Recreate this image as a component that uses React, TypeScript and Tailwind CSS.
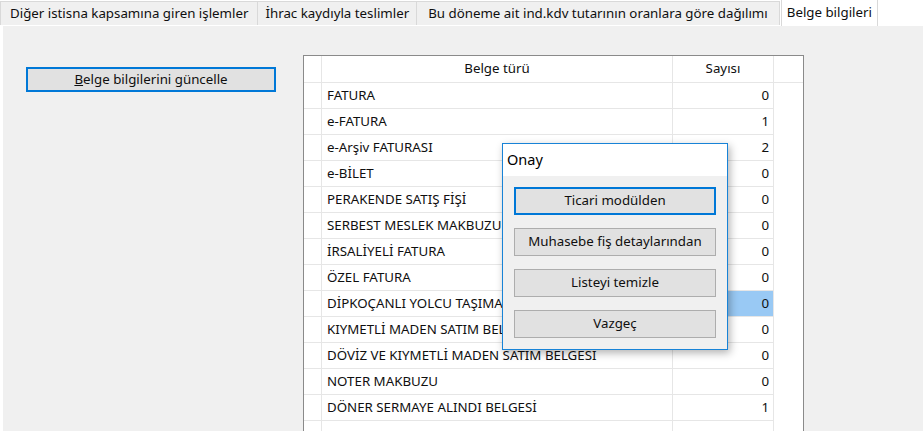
import React from 'react';

const tabs = [
    { label: 'Diğer istisna kapsamına giren işlemler', px: 'px-[9px]' },
    { label: 'İhrac kaydıyla teslimler', px: 'px-[7px]' },
    { label: 'Bu döneme ait ind.kdv tutarının oranlara göre dağılımı', px: 'px-[11px]' },
];

const rows: [string, string][] = [
    ['FATURA', '0'],
    ['e-FATURA', '1'],
    ['e-Arşiv FATURASI', '2'],
    ['e-BİLET', '0'],
    ['PERAKENDE SATIŞ FİŞİ', '0'],
    ['SERBEST MESLEK MAKBUZU', '0'],
    ['İRSALİYELİ FATURA', '0'],
    ['ÖZEL FATURA', '0'],
    ['DİPKOÇANLI YOLCU TAŞIMA BİLETİ', '0'],
    ['KIYMETLİ MADEN SATIM BELGESİ', '0'],
    ['DÖVİZ VE KIYMETLİ MADEN SATIM BELGESİ', '0'],
    ['NOTER MAKBUZU', '0'],
    ['DÖNER SERMAYE ALINDI BELGESİ', '1'],
    ['', ''],
];

const dialogButtons = ['Ticari modülden', 'Muhasebe fiş detaylarından', 'Listeyi temizle', 'Vazgeç'];

const App: React.FC = () => {
    return (
        <div className="relative w-[923px] h-[431px] overflow-hidden bg-white text-[13.3px] text-[#0f0f0f] font-['Noto_Sans',sans-serif]">
            {/* tab strip */}
            <div className="flex h-[26px] items-start whitespace-nowrap">
                {tabs.map((t) => (
                    <div
                        key={t.label}
                        className={`h-[24px] mt-[1px] ${t.px} flex items-center bg-[#f0f0f0] border border-[#d9d9d9] border-b-0 -mr-px`}
                    >
                        {t.label}
                    </div>
                ))}
                <div className="h-[26px] ml-[2px] px-[5px] flex items-center bg-white border-x border-[#d9d9d9]">
                    Belge bilgileri
                </div>
            </div>

            {/* panel */}
            <div className="flex h-[405px] bg-[#f0f0f0] border-l-[3px] border-white">
                <div className="pl-[23px] pt-[41px]">
                    <button className="w-[250px] h-[25px] bg-[#e1e1e1] border-2 border-[#0078d7] flex items-center justify-center">
                        <span>
                            <span className="underline">B</span>elge bilgilerini güncelle
                        </span>
                    </button>
                </div>

                <div className="ml-[27px] mt-[29px] w-[501px] bg-white border-l border-t border-r border-[#8a8a8a] self-start">
                    <div className="flex h-[27px] border-b border-[#e6e6e6]">
                        <div className="w-[18px] border-r border-[#e6e6e6]" />
                        <div className="w-[351px] border-r border-[#e6e6e6] flex items-center justify-center">Belge türü</div>
                        <div className="w-[101px] border-r border-[#e6e6e6] flex items-center justify-center">Sayısı</div>
                    </div>
                    {rows.map(([name, n], i) => (
                        <div key={i} className="flex h-[26px] whitespace-nowrap">
                            <div className="w-[18px] border-r border-b border-[#e6e6e6]" />
                            <div className="w-[351px] border-r border-b border-[#e6e6e6] flex items-center pl-[5px]">{name}</div>
                            <div
                                className={`w-[101px] border-r border-b border-[#e6e6e6] flex items-center justify-end pr-[4px] ${
                                    i === 8 ? 'bg-[#99c9f4]' : ''
                                }`}
                            >
                                {n}
                            </div>
                        </div>
                    ))}
                </div>
            </div>

            {/* Onay dialog */}
            <div className="absolute left-[502px] top-[143px] w-[226px] h-[207px] bg-[#f0f0f0] border border-[#1883d7] shadow-[2px_3px_8px_rgba(0,0,0,0.3)] flex flex-col">
                <div className="h-[32px] bg-white flex items-center pl-[4px] text-[14.5px] text-black">Onay</div>
                <div className="flex flex-col gap-[13px] px-[11px] pt-[11px]">
                    {dialogButtons.map((b, i) => (
                        <button
                            key={b}
                            className={`h-[28px] w-[202px] bg-[#e1e1e1] flex items-center justify-center ${
                                i === 0 ? 'border-2 border-[#0078d7]' : 'border border-[#adadad]'
                            }`}
                        >
                            {b}
                        </button>
                    ))}
                </div>
            </div>
        </div>
    );
};

export default App;
